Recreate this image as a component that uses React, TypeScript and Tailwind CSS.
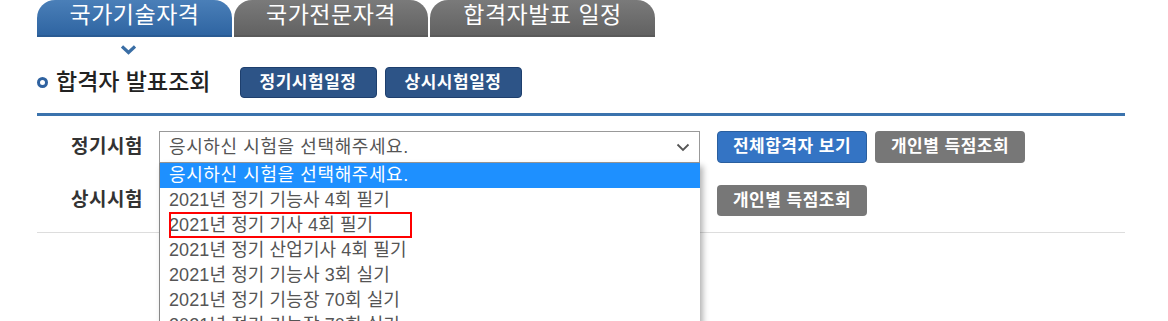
const FONT = { fontFamily: '"Liberation Sans", "Noto Sans CJK KR", sans-serif' };

const OPTIONS = [
  "2021년 정기 기능사 4회 필기",
  "2021년 정기 기사 4회 필기",
  "2021년 정기 산업기사 4회 필기",
  "2021년 정기 기능사 3회 실기",
  "2021년 정기 기능장 70회 실기",
  "2021년 정기 기능장 70회 실기",
];

export default function App() {
  return (
    <div className="relative w-[1168px] h-[321px] overflow-hidden bg-white" style={FONT}>
      {/* 상단 탭 */}
      <div className="flex gap-[2px] pl-[37px]">
        <div className="w-[195px] h-[37px] rounded-t-[18px] bg-gradient-to-b from-[#4a7fb8] to-[#2f65a2] border-b-2 border-[#2a5b93] flex items-center justify-center pb-[4px] text-white text-[23px] tracking-[0.5px]">
          국가기술자격
        </div>
        <div className="w-[194px] h-[37px] rounded-t-[18px] bg-gradient-to-b from-[#7a7a7a] to-[#626262] border-b-2 border-[#5a5a5a] flex items-center justify-center pb-[4px] text-white text-[23px] tracking-[0.5px]">
          국가전문자격
        </div>
        <div className="w-[225px] h-[37px] rounded-t-[18px] bg-gradient-to-b from-[#7a7a7a] to-[#626262] border-b-2 border-[#5a5a5a] flex items-center justify-center pb-[4px] text-white text-[23px] tracking-[0.5px]">
          합격자발표 일정
        </div>
      </div>

      {/* 선택 탭 화살표 */}
      <div className="pl-[121px] pt-[8px] h-[20px]">
        <svg width="15" height="10" viewBox="0 0 15 10">
          <path d="M1 1.5 L7.5 7.5 L14 1.5" fill="none" stroke="#3a6ea5" strokeWidth="3.2" />
        </svg>
      </div>

      {/* 제목 */}
      <div className="flex items-center pl-[37px] mt-[10px] h-[31px]">
        <span className="w-[11px] h-[11px] rounded-full border-[3px] border-[#2f62a0] bg-white" />
        <span className="ml-[8px] text-[23px] font-medium text-[#222]">합격자 발표조회</span>
        <div className="flex gap-[8px] ml-[29px]">
          <button className="w-[137px] h-[31px] rounded-[4px] bg-[#2d5487] border border-[#1e3f6d] text-white text-[17px] font-bold tracking-[0.5px]">
            정기시험일정
          </button>
          <button className="w-[137px] h-[31px] rounded-[4px] bg-[#2d5487] border border-[#1e3f6d] text-white text-[17px] font-bold tracking-[0.5px]">
            상시시험일정
          </button>
        </div>
      </div>

      <div className="ml-[37px] w-[1088px] mt-[15px] h-[3px] bg-[#3b73ad]" />

      {/* 검색 영역 */}
      <div className="ml-[37px] w-[1088px] mt-[15px] pb-[16px] border-b border-[#dddddd]">
        <div className="flex items-center h-[32px]">
          <span className="w-[106px] text-right text-[19px] font-bold text-[#333] tracking-[0.5px]">정기시험</span>
          <div className="relative ml-[16px] w-[541px] h-[32px]">
            <div className="h-full border border-[#999] flex items-center justify-between pl-[9px] pr-[9px] text-[18px] text-[#555] tracking-[0.6px]">
              <span>응시하신 시험을 선택해주세요.</span>
              <svg width="14" height="9" viewBox="0 0 14 9">
                <path d="M1.5 1.5 L7 7 L12.5 1.5" fill="none" stroke="#555" strokeWidth="1.8" />
              </svg>
            </div>
            {/* 펼쳐진 목록 */}
            <div className="absolute left-0 top-[32px] w-[541px] bg-white border-l border-[#888] shadow-[3px_3px_6px_rgba(0,0,0,0.3)] z-10 text-[18px]">
              <div className="h-[25px] bg-[#1e90ff] text-white pl-[9px] flex items-center tracking-[0.6px]">
                응시하신 시험을 선택해주세요.
              </div>
              {OPTIONS.map((o, i) => (
                <div key={i} className="h-[25px] text-[#555] pl-[9px] flex items-center tracking-[0.1px]">
                  {o}
                </div>
              ))}
            </div>
          </div>
          <button className="ml-[17px] w-[150px] h-[32px] rounded-[4px] bg-[#3474c4] border border-[#2a5f9f] text-white text-[17px] font-bold tracking-[0.5px]">
            전체합격자 보기
          </button>
          <button className="ml-[8px] w-[150px] h-[32px] rounded-[4px] bg-[#777] text-white text-[17px] font-bold tracking-[0.5px]">
            개인별 득점조회
          </button>
        </div>

        <div className="flex items-center h-[31px] mt-[22px]">
          <span className="w-[106px] text-right text-[19px] font-bold text-[#333] tracking-[0.5px]">상시시험</span>
          <button className="ml-[574px] w-[150px] h-[31px] rounded-[4px] bg-[#777] text-white text-[17px] font-bold tracking-[0.5px]">
            개인별 득점조회
          </button>
        </div>
      </div>

      {/* 강조 표시 */}
      <div className="absolute left-[169px] top-[212px] w-[243px] h-[26px] border-2 border-[#ff0000] z-20" />
    </div>
  );
}
